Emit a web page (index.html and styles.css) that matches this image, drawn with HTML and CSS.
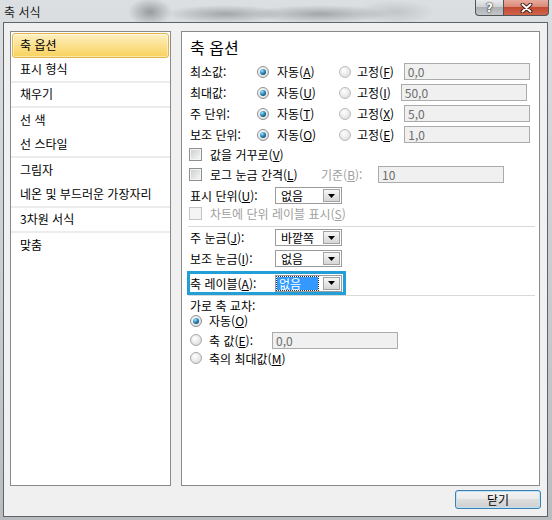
FILE: index.html
```html
<!DOCTYPE html>
<html lang="ko">
<head>
<meta charset="utf-8">
<title>축 서식</title>
<link rel="stylesheet" href="styles.css">
</head>
<body>
<div class="window">
  <div class="titlebar">
    <span class="title">축 서식</span>
    <div class="caption">
      <div class="cap-btn help">?</div>
      <div class="cap-btn close">
        <svg width="13" height="10" viewBox="0 0 13 10"><path d="M2.5 1.5 L10.5 8.5 M10.5 1.5 L2.5 8.5" stroke="#3b1710" stroke-width="3.8" stroke-linecap="round"/><path d="M2.5 1.5 L10.5 8.5 M10.5 1.5 L2.5 8.5" stroke="#ffffff" stroke-width="2" stroke-linecap="round"/></svg>
      </div>
    </div>
  </div>
  <div class="body">
    <div class="main">
      <ul class="nav">
        <li class="item selected">축 옵션</li>
        <li class="item group-end">표시 형식</li>
        <li class="item group-end">채우기</li>
        <li class="item">선 색</li>
        <li class="item group-end">선 스타일</li>
        <li class="item">그림자</li>
        <li class="item group-end">네온 및 부드러운 가장자리</li>
        <li class="item group-end">3차원 서식</li>
        <li class="item">맞춤</li>
      </ul>
      <div class="panel">
        <h1 class="heading">축 옵션</h1>
        <div class="row r-opt">
          <span class="lbl">최소값:</span>
          <span class="radio on"></span><span class="opt">자동(<u>A</u>)</span>
          <span class="radio r2"></span><span class="opt2">고정(<u>F</u>)</span>
          <span class="field">0,0</span>
        </div>
        <div class="row r-opt">
          <span class="lbl">최대값:</span>
          <span class="radio on"></span><span class="opt">자동(<u>U</u>)</span>
          <span class="radio r2"></span><span class="opt2">고정(<u>I</u>)</span>
          <span class="field">50,0</span>
        </div>
        <div class="row r-opt">
          <span class="lbl">주 단위:</span>
          <span class="radio on"></span><span class="opt">자동(<u>T</u>)</span>
          <span class="radio r2"></span><span class="opt2">고정(<u>X</u>)</span>
          <span class="field">5,0</span>
        </div>
        <div class="row r-opt">
          <span class="lbl">보조 단위:</span>
          <span class="radio on"></span><span class="opt">자동(<u>O</u>)</span>
          <span class="radio r2"></span><span class="opt2">고정(<u>E</u>)</span>
          <span class="field">1,0</span>
        </div>
        <div class="row r-chk1">
          <span class="chk"></span><span>값을 거꾸로(<u>V</u>)</span>
        </div>
        <div class="row r-chk2">
          <span class="chk"></span><span class="log">로그 눈금 간격(<u>L</u>)</span>
          <span class="base dis">기준(<u>B</u>):</span>
          <span class="field">10</span>
        </div>
        <div class="row r-unit">
          <span class="lbl2">표시 단위(<u>U</u>):</span>
          <span class="combo"><span class="val">없음</span><span class="drop"><svg width="7" height="4" viewBox="0 0 7 4"><polygon points="0,0 7,0 3.5,4" fill="#000"/></svg></span></span>
        </div>
        <div class="row r-chk3">
          <span class="chk dis-chk"></span><span class="dis">차트에 단위 레이블 표시(<u>S</u>)</span>
        </div>
        <div class="sep sep1"></div>
        <div class="row r-combo">
          <span class="lbl2">주 눈금(<u>J</u>):</span>
          <span class="combo"><span class="val">바깥쪽</span><span class="drop"><svg width="7" height="4" viewBox="0 0 7 4"><polygon points="0,0 7,0 3.5,4" fill="#000"/></svg></span></span>
        </div>
        <div class="row r-combo">
          <span class="lbl2">보조 눈금(<u>I</u>):</span>
          <span class="combo"><span class="val">없음</span><span class="drop"><svg width="7" height="4" viewBox="0 0 7 4"><polygon points="0,0 7,0 3.5,4" fill="#000"/></svg></span></span>
        </div>
        <div class="row focus-box">
          <span class="lbl2">축 레이블(<u>A</u>):</span>
          <span class="combo"><span class="val"><span class="hl">없음</span></span><span class="drop"><svg width="7" height="4" viewBox="0 0 7 4"><polygon points="0,0 7,0 3.5,4" fill="#000"/></svg></span></span>
        </div>
        <div class="sep sep2"></div>
        <div class="row r-cap">가로 축 교차:</div>
        <div class="row r-rad">
          <span class="radio on"></span><span>자동(<u>O</u>)</span>
        </div>
        <div class="row r-val">
          <span class="radio"></span><span class="axval">축 값(<u>E</u>):</span>
          <span class="field">0,0</span>
        </div>
        <div class="row r-rad2">
          <span class="radio"></span><span>축의 최대값(<u>M</u>)</span>
        </div>
      </div>
    </div>
    <div class="footer">
      <button class="btn-close" type="button">닫기</button>
    </div>
  </div>
</div>
</body>
</html>
```

FILE: styles.css
```css
html, body {
  margin: 0;
  padding: 0;
}
body {
  width: 552px;
  height: 520px;
  overflow: hidden;
  font-family: "Noto Sans CJK KR", "Noto Sans", sans-serif;
  font-size: 12px;
  color: #000;
}
.window {
  width: 552px;
  height: 520px;
  display: flex;
  flex-direction: column;
  background:
    radial-gradient(ellipse 22px 14px at 150px 12px, rgba(70,72,74,.45), rgba(70,72,74,0)),
    radial-gradient(ellipse 60px 9px at 225px 14px, rgba(60,62,64,.35), rgba(60,62,64,0)),
    radial-gradient(ellipse 70px 9px at 320px 14px, rgba(60,62,64,.35), rgba(60,62,64,0)),
    radial-gradient(ellipse 40px 12px at 395px 12px, rgba(120,122,124,.25), rgba(120,122,124,0)),
    linear-gradient(#dcdfe1, #c8cbce 60%, #b9bcbf);
}
.titlebar {
  height: 22px;
  flex-shrink: 0;
  display: flex;
  align-items: flex-start;
}
.title {
  margin: 4px 0 0 4px;
  line-height: 16px;
  color: #1b1b1b;
}
.caption {
  margin-left: auto;
  margin-right: 3px;
  display: flex;
}
.cap-btn {
  height: 16px;
  box-sizing: border-box;
  border: 1px solid #50555b;
  border-top: none;
  display: flex;
  align-items: center;
  justify-content: center;
}
.help {
  width: 28px;
  border-right: none;
  border-radius: 0 0 0 4px;
  background: linear-gradient(#e9ebed, #cfd2d5 45%, #aeb2b6 50%, #c2c6c9);
  color: #fff;
  font-family: "DejaVu Sans", sans-serif;
  font-weight: bold;
  font-size: 12px;
  line-height: 14px;
  text-shadow: 0 0 2px #1c1c1c, 0 0 1px #000;
}
.close {
  width: 46px;
  border-radius: 0 0 4px 0;
  background: linear-gradient(#e8ab9d, #d98a78 45%, #c44a33 50%, #d0644b);
}
.body {
  flex: 1;
  margin: 0 4px 3px 3px;
  border: 1px solid #5e6369;
  background: #f0f0f0;
  padding: 8px 6px 0 6px;
  display: flex;
  flex-direction: column;
}
.main {
  display: flex;
  gap: 10px;
  height: 455px;
  flex-shrink: 0;
}
.nav {
  list-style: none;
  margin: 0;
  padding: 1px 0 0;
  width: 161px;
  height: 455px;
  box-sizing: border-box;
  border: 1px solid #8a8a8a;
  background: #fff;
  flex-shrink: 0;
}
.item {
  height: 25px;
  box-sizing: border-box;
  padding-left: 9px;
  line-height: 24px;
  white-space: nowrap;
}
.item.group-end {
  border-bottom: 2px solid #ececec;
  line-height: 22px;
}
.item.selected {
  margin: 0 1px;
  padding-left: 7px;
  border: 1px solid #e0b54e;
  border-radius: 3px;
  line-height: 22px;
  background: linear-gradient(#fdf0c2, #fbe08e 50%, #f8d25c 100%);
  box-shadow: inset 0 0 0 1px rgba(255,255,255,.45);
}
.panel {
  width: 359px;
  height: 455px;
  box-sizing: border-box;
  border: 1px solid #8a8a8a;
  background: #fff;
  padding: 5px 4px 0 8px;
  display: flex;
  flex-direction: column;
}
.heading {
  font-size: 16px;
  font-weight: normal;
  line-height: 20px;
  height: 20px;
  margin: 0 0 4px;
}
.row {
  display: flex;
  align-items: center;
  white-space: nowrap;
  flex-shrink: 0;
}
.r-opt { height: 21px; }
.lbl { width: 67px; flex-shrink: 0; }
.lbl2 { width: 85px; flex-shrink: 0; }
.radio {
  width: 12px;
  height: 12px;
  box-sizing: border-box;
  border-radius: 50%;
  border: 1px solid #a3a7ab;
  background: radial-gradient(circle at 40% 35%, #ffffff, #e8e8e8 55%, #d2d4d6);
  margin-right: 7px;
  flex-shrink: 0;
}
.r-opt .radio { margin-right: 8px; }
.r-opt .radio.r2 { margin-right: 6px; border-color: #b9bcbf; }
.radio.on {
  border-color: #8c9094;
}
.radio.on::after {
  content: "";
  display: block;
  width: 6px;
  height: 6px;
  margin: 2px;
  border-radius: 50%;
  background: radial-gradient(circle at 35% 30%, #a9e4ff 0, #3e9ccd 35%, #175a85 70%, #0d3d63);
}
.opt { width: 62px; flex-shrink: 0; }
.opt2 { margin-right: 10px; flex-shrink: 0; }
.field {
  width: 126px;
  height: 17px;
  box-sizing: border-box;
  border: 1px solid #ababab;
  background: #f0f0f0;
  color: #6d6d6d;
  padding-left: 3px;
  line-height: 15px;
  flex-shrink: 0;
}
.chk {
  width: 13px;
  height: 13px;
  box-sizing: border-box;
  border: 1px solid #8e8f8f;
  background: linear-gradient(135deg, #c9cbcd, #eef0f1 80%, #f6f6f6);
  box-shadow: inset 0 0 0 1px #f4f4f4;
  margin: 0 8px 0 -1px;
  flex-shrink: 0;
}
.chk.dis-chk {
  border-color: #c4c4c4;
  background: #f4f4f4;
}
.dis { color: #a0a0a0; }
.r-chk1 { height: 19px; }
.r-chk2 { height: 20px; }
.log { width: 111px; flex-shrink: 0; }
.base { width: 57px; flex-shrink: 0; }
.r-unit { height: 21px; margin-top: 1px; }
.r-chk3 { height: 15px; }
.sep {
  height: 1px;
  background: #d9d9d9;
  margin-left: -2px;
  flex-shrink: 0;
}
.sep1 { margin-top: 5px; }
.r-combo { height: 21px; }
.combo {
  width: 67px;
  height: 17px;
  box-sizing: border-box;
  border: 1px solid #9b9b9b;
  background: #fff;
  display: flex;
  flex-shrink: 0;
}
.combo .val {
  flex: 1;
  padding-left: 5px;
  line-height: 15px;
}
.combo .drop {
  width: 17px;
  height: 13px;
  margin: 1px 1px 1px 0;
  box-sizing: border-box;
  border: 1px solid #a2a2a2;
  background: linear-gradient(#f7f7f7, #e6e6e6 50%, #d6d6d6);
  display: flex;
  align-items: center;
  justify-content: center;
}
.focus-box {
  margin: 2px 0 0 -3px;
  width: 159px;
  height: 24px;
  box-sizing: border-box;
  border: 3px solid #219fd6;
}
.focus-box .combo .val { padding-left: 1px; }
.hl {
  display: inline-block;
  width: 39px;
  height: 13px;
  line-height: 13px;
  padding-left: 2px;
  background: #3399ff;
  color: #fff;
  outline: 1px dotted #333;
}
.sep2 { margin-top: 0; }
.r-cap { height: 16px; margin-top: 1px; }
.r-rad { height: 15px; }
.r-val { height: 20px; margin-top: 2px; }
.axval { width: 63px; flex-shrink: 0; }
.r-rad2 { height: 16px; }
.footer {
  display: flex;
  justify-content: flex-end;
  padding-top: 4px;
}
.btn-close {
  width: 86px;
  height: 19px;
  padding: 0;
  box-sizing: border-box;
  border: 1px solid #3c7fb1;
  border-radius: 3px;
  background: linear-gradient(#f3f3f3, #ebebeb 45%, #dddddd 50%, #cfcfcf);
  box-shadow: inset 0 0 0 1px #bfe3f6;
  font-family: "Noto Sans CJK KR", "Noto Sans", sans-serif;
  font-size: 12px;
  line-height: 15px;
  color: #000;
}
```
